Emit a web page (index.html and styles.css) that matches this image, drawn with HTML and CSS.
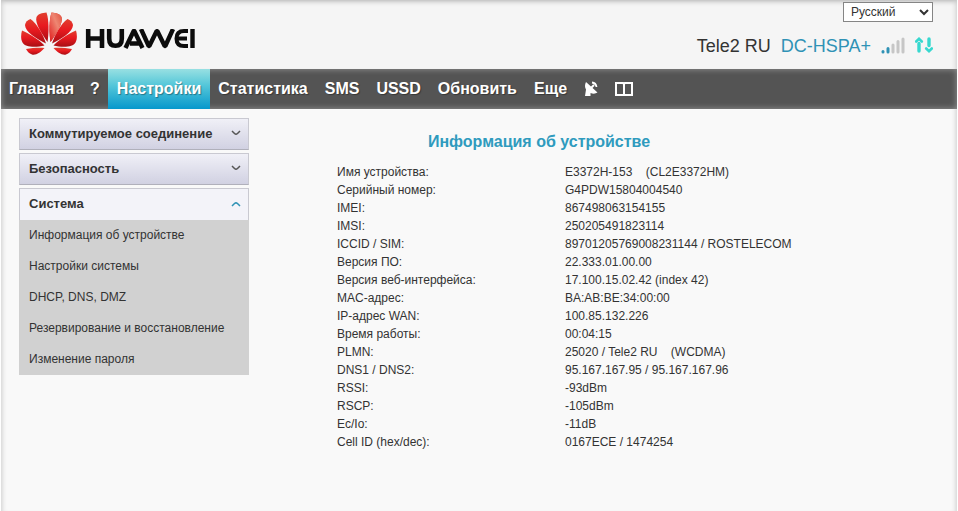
FILE: index.html
```html
<!DOCTYPE html>
<html lang="ru">
<head>
<meta charset="utf-8">
<title>Информация об устройстве</title>
<meta name="viewport" content="width=device-width, initial-scale=1">
<link rel="stylesheet" href="styles.css">
</head>
<body>
<div class="page">
  <header class="header">
    <a class="brand" href="#" aria-label="HUAWEI">
      <svg class="flower" viewBox="0 0 56 44" aria-hidden="true">
        <defs>
          <linearGradient id="petal" x1="0" y1="0" x2="0" y2="1">
            <stop offset="0" stop-color="#e0402f"/>
            <stop offset=".45" stop-color="#e8191f"/>
            <stop offset="1" stop-color="#a80f14"/>
          </linearGradient>
          <linearGradient id="petal-light" x1="1" y1="0" x2="0" y2="1">
            <stop offset="0" stop-color="#e0523f"/>
            <stop offset=".4" stop-color="#ee8672"/>
            <stop offset="1" stop-color="#e01a1c"/>
          </linearGradient>
        </defs>
        <g id="half" fill="url(#petal)">
          <path d="M26.500 30C21 22 13.500 11 15.500 5C17 2 21 .800 25.500 .500C28 8 28 20 26.500 30Z"/>
          <path d="M25 31.500C16 27 4 20 4 13C4.500 10 6.500 8 9.500 7C16 12 22 22 25 31.500Z"/>
          <path d="M23.500 33.500C15 35.500 4 35.500 1.500 30.500C-.500 27 0 22 1 18.500C8 21.500 18 27.500 23.500 33.500Z"/>
          <path d="M23.500 36C20 40 15 43.500 11 42.500C8 41.500 6 39 5 37C11 36 18 35.500 23.500 36Z"/>
        </g>
        <use href="#half" transform="translate(56 0) scale(-1 1)"/>
        <path fill="url(#petal-light)" d="M29.500 30C35 22 42.500 11 40.500 5C39 2 35 .800 30.500 .500C28 8 28 20 29.500 30Z"/>
      </svg>
      <svg class="wordmark" viewBox="0 0 110 20" aria-hidden="true">
        <g fill="none" stroke="#0c0c0c" stroke-width="4.400">
          <path d="M3.200 0V19M17 0V19M3.200 9.500H17" stroke-width="4.600"/>
          <path d="M24.200 0V9.500Q24.200 16.800 30.500 16.800T36.800 9.500V0" stroke-width="4.600"/>
          <path d="M40.500 19L48.700 2H49.300L57.500 19M45 14.500H54" stroke-linejoin="round"/>
          <path d="M56 0L63.700 17H64.300L71.700 2H72.300L79.700 17H80.300L88 0" stroke-linejoin="bevel"/>
          <path d="M103 2H99Q91.500 2 91.500 9.500T99 17H103M91.500 9.500H102" stroke-width="4"/>
          <path d="M107.500 0V19"/>
        </g>
      </svg>
    </a>
    <div class="status">
      <select class="language" aria-label="Язык"><option>Русский</option></select>
      <div class="network">
        <span>Tele2 RU</span>
        <span class="mode">DC-HSPA+</span>
        <svg class="signal" viewBox="0 0 24 18" role="img" aria-label="Уровень сигнала">
          <g stroke-width="3" stroke-linecap="round">
            <path stroke="#2f92b5" d="M2 14.500V15M7 11.500V15"/>
            <path stroke="#c6c6c6" d="M12 8V15M17 4.500V15M22 2V15"/>
          </g>
        </svg>
        <svg class="traffic" viewBox="0 0 18 18" role="img" aria-label="Передача данных" fill="none" stroke="#37d8cf" stroke-width="3.400" stroke-linecap="round">
          <path d="M4 6.500V14M14 2V8.500"/>
          <path stroke-width="2.600" d="M1.200 4.500L4 1.800L6.800 4.500M11.200 11.500L14 14.200L16.800 11.500"/>
        </svg>
      </div>
    </div>
  </header>

  <nav class="menu">
    <a href="#">Главная</a>
    <a href="#">?</a>
    <a class="active" href="#">Настройки</a>
    <a href="#">Статистика</a>
    <a href="#">SMS</a>
    <a href="#">USSD</a>
    <a href="#">Обновить</a>
    <a href="#">Еще</a>
    <a href="#" aria-label="Антенна">
      <svg class="dish" viewBox="0 0 14 16" fill="#fff" aria-hidden="true">
        <path d="M2 1Q0 5 2 8.500L1 15H6.500L6.500 12Q10.500 13.500 13.500 11.500Z"/>
        <path d="M8 1.500Q12 2 12.500 6" fill="none" stroke="#fff" stroke-width="1.800"/>
        <path d="M6 8L10 4" stroke="#fff" stroke-width="2"/>
      </svg>
    </a>
    <a href="#" aria-label="Телефонная книга">
      <svg class="book" viewBox="0 0 18 14" fill="none" stroke="#fff" stroke-width="2" aria-hidden="true">
        <path d="M9 13H1V1H8L9 2L10 1H17V13H9V2"/>
      </svg>
    </a>
  </nav>

  <div class="content">
    <aside class="sidebar">
      <button class="group" type="button">Коммутируемое соединение
        <svg class="chevron" viewBox="0 0 10 6" aria-hidden="true"><path d="M1 1L3.500 3.500Q5 4.800 6.500 3.500L9 1"/></svg></button>
      <button class="group" type="button">Безопасность
        <svg class="chevron" viewBox="0 0 10 6" aria-hidden="true"><path d="M1 1L3.500 3.500Q5 4.800 6.500 3.500L9 1"/></svg></button>
      <div class="section">
        <button class="group open" type="button" aria-expanded="true">Система
          <svg class="chevron" viewBox="0 0 10 6" aria-hidden="true"><path d="M1 5L3.500 2.500Q5 1.200 6.500 2.500L9 5"/></svg></button>
        <ul class="links">
          <li><a href="#">Информация об устройстве</a></li>
          <li><a href="#">Настройки системы</a></li>
          <li><a href="#">DHCP, DNS, DMZ</a></li>
          <li><a href="#">Резервирование и восстановление</a></li>
          <li><a href="#">Изменение пароля</a></li>
        </ul>
      </div>
    </aside>
    <main class="info">
      <h1>Информация об устройстве</h1>
      <table>
        <tbody>
          <tr><th scope="row">Имя устройства:</th><td>E3372H-153 &nbsp;&nbsp; (CL2E3372HM)</td></tr>
          <tr><th scope="row">Серийный номер:</th><td>G4PDW15804004540</td></tr>
          <tr><th scope="row">IMEI:</th><td>867498063154155</td></tr>
          <tr><th scope="row">IMSI:</th><td>250205491823114</td></tr>
          <tr><th scope="row">ICCID / SIM:</th><td>89701205769008231144 / ROSTELECOM</td></tr>
          <tr><th scope="row">Версия ПО:</th><td>22.333.01.00.00</td></tr>
          <tr><th scope="row">Версия веб-интерфейса:</th><td>17.100.15.02.42 (index 42)</td></tr>
          <tr><th scope="row">MAC-адрес:</th><td>BA:AB:BE:34:00:00</td></tr>
          <tr><th scope="row">IP-адрес WAN:</th><td>100.85.132.226</td></tr>
          <tr><th scope="row">Время работы:</th><td>00:04:15</td></tr>
          <tr><th scope="row">PLMN:</th><td>25020 / Tele2 RU &nbsp;&nbsp; (WCDMA)</td></tr>
          <tr><th scope="row">DNS1 / DNS2:</th><td>95.167.167.95 / 95.167.167.96</td></tr>
          <tr><th scope="row">RSSI:</th><td>-93dBm</td></tr>
          <tr><th scope="row">RSCP:</th><td>-105dBm</td></tr>
          <tr><th scope="row">Ec/Io:</th><td>-11dB</td></tr>
          <tr><th scope="row">Cell ID (hex/dec):</th><td>0167ECE / 1474254</td></tr>
        </tbody>
      </table>
    </main>
  </div>
</div>
</body>
</html>
```
FILE: styles.css
```css
* { box-sizing: border-box; }
body {
  margin: 0;
  background: #fff;
  color: #333;
  font: 12px/18px "Liberation Sans", Arial, sans-serif;
}
a { color: inherit; text-decoration: none; }
.page {
  min-height: 100vh;
  margin: 0 1px;
  background: #f9f9f9;
  box-shadow: inset 5px 0 5px -4px #ccc, inset -5px 0 5px -4px #ccc;
}
.header {
  display: flex;
  justify-content: space-between;
  height: 69px;
  padding: 2px 24px 0 20px;
  background: #f5f5f5;
  box-shadow: inset 5px 0 5px -4px #ccc, inset -5px 0 5px -4px #ccc, inset 0 5px 5px -4px #aaa;
}
.brand { display: flex; align-items: flex-start; gap: 8px; padding-top: 10px; }
.flower { width: 56px; height: 44px; }
.wordmark { width: 110px; height: 20px; margin-top: 17px; }
.status { display: flex; flex-direction: column; align-items: flex-end; gap: 12px; }
.language {
  width: 90px;
  height: 20px;
  padding: 0 3px;
  border: 1px solid #858585;
  border-radius: 0;
  background: #fff;
  color: #333;
  font: 12px "Liberation Sans", Arial, sans-serif;
}
.network { display: flex; align-items: center; gap: 10px; font-size: 18px; line-height: 24px; }
.mode { color: #2f92b5; }
.signal { width: 24px; height: 18px; }
.traffic { width: 18px; height: 18px; }
.menu {
  display: flex;
  height: 40px;
  background: #545454;
  box-shadow: inset 0 0 6px #999;
  color: #fff;
  font-size: 16px;
  font-weight: bold;
  line-height: 40px;
  text-shadow: 1px 1px 1px rgba(0, 0, 0, .35);
}
.menu a { display: flex; align-items: center; padding: 0 8px; }
.menu .active { padding: 0 9px; background: linear-gradient(#98e0e2, #55c7d9 40%, #0798cc); }
.menu .active ~ a { padding-right: 9px; }
.dish { width: 14px; height: 16px; }
.book { width: 18px; height: 14px; }
.content { display: flex; padding: 9px 18px; gap: 88px; }
.sidebar { display: flex; flex-direction: column; flex: 0 0 230px; gap: 3px; }
.group {
  display: flex;
  align-items: center;
  justify-content: space-between;
  width: 100%;
  height: 32px;
  padding: 0 7px 2px 9px;
  border: 1px solid #c9c9d1;
  border-bottom-color: #b0b0bb;
  background: linear-gradient(#f0f0f7, #d1d1e2);
  color: #333;
  font: bold 13px "Liberation Sans", Arial, sans-serif;
}
.open { border-bottom: 0; background: #f3f3f9; }
.chevron { width: 10px; height: 6px; fill: none; stroke: #555; stroke-width: 1.500; }
.open .chevron { stroke: #2f92b5; }
.links { margin: 0; padding: 0; background: #d1d1d1; list-style: none; }
.links a { display: block; padding: 0 10px; line-height: 31px; }
.info { flex: 1; padding-top: 12px; }
h1 {
  max-width: 404px;
  margin: 0 0 9px;
  color: #2f9bbe;
  font-size: 16px;
  line-height: 24px;
  text-align: center;
}
table { border-collapse: collapse; }
th, td { padding: 0; font-weight: normal; text-align: left; white-space: nowrap; }
th { width: 228px; }
```
